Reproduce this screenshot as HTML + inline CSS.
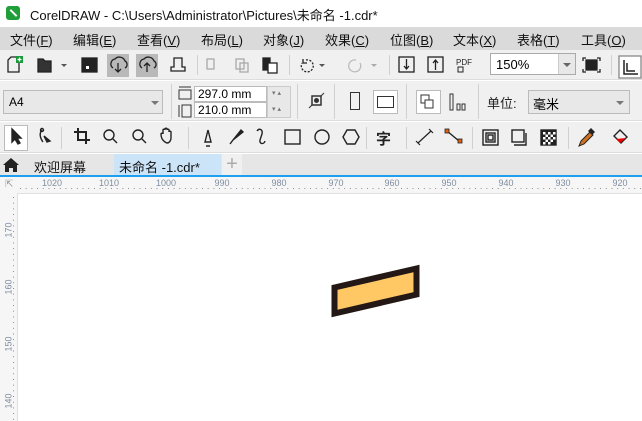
<!DOCTYPE html>
<html><head><meta charset="utf-8"><style>
*{margin:0;padding:0;box-sizing:border-box}
body{width:642px;height:421px;overflow:hidden;background:#fff;font-family:"Liberation Sans","Noto Sans CJK SC",sans-serif;position:relative}
.a{position:absolute}
.menu span{position:absolute;top:3px;font-size:13px;color:#111}
.sep{position:absolute;width:1px;background:#d0d0d0}
.rn{position:absolute;top:178px;font-size:9px;color:#7f8da0;transform:translateX(-50%)}
.vn{position:absolute;left:1px;font-size:9px;color:#7f8da0;transform:rotate(-90deg);transform-origin:center}
svg{position:absolute;overflow:visible}
</style></head><body>
<!-- title -->
<div class="a" style="left:0;top:0;width:642px;height:27px;background:#fff"></div>
<div class="a" style="left:6px;top:6px;width:14px;height:14px;border-radius:3px;background:#1f9e3a"></div>
<div class="a" style="left:9px;top:12px;width:9px;height:2px;background:#fff;transform:rotate(45deg)"></div>
<div class="a" style="left:30px;top:5px;font-size:13px;color:#111">CorelDRAW - C:\Users\Administrator\Pictures\未命名 -1.cdr*</div>
<!-- menu -->
<div class="a menu" style="left:0;top:27px;width:642px;height:23px;background:#dadada">
<span style="left:10px">文件(<u>F</u>)</span><span style="left:73px">编辑(<u>E</u>)</span><span style="left:137px">查看(<u>V</u>)</span><span style="left:201px">布局(<u>L</u>)</span><span style="left:263px">对象(<u>J</u>)</span><span style="left:325px">效果(<u>C</u>)</span><span style="left:390px">位图(<u>B</u>)</span><span style="left:453px">文本(<u>X</u>)</span><span style="left:517px">表格(<u>T</u>)</span><span style="left:581px">工具(<u>O</u>)</span>
</div>
<!-- toolbar 1 -->
<div class="a" style="left:0;top:50px;width:642px;height:30px;background:#f0f0f0;border-bottom:1px solid #ddd"></div>
<svg style="left:0;top:50px" width="642" height="30" fill="none" stroke="#222" stroke-width="1.3">
<path d="M8 22V10l3-3h8v15z"/><rect x="16" y="6" width="7" height="7" fill="#1a9a3a" stroke="none"/><path d="M19.5 7.5v4M17.5 9.5h4" stroke="#fff"/>
<path d="M38 22V9h5l2 2h6v11z" fill="#333"/><path d="M61 14l3 3 3-3" fill="#555" stroke="none"/>
<rect x="82" y="8" width="15" height="14" fill="#222"/><rect x="86" y="16" width="3" height="3" fill="#fff" stroke="none"/>
<rect x="107" y="4" width="22" height="23" fill="#b9b9b9" stroke="none"/><rect x="136" y="4" width="22" height="23" fill="#b9b9b9" stroke="none"/>
<path d="M113 18a5 5 0 0 1 2-9 6 6 0 0 1 10 2 4 4 0 0 1 0 7M118 13v9M115 19l3 3 3-3"/>
<path d="M142 18a5 5 0 0 1 2-9 6 6 0 0 1 10 2 4 4 0 0 1 0 7M147 22v-9M144 16l3-3 3 3"/>
<path d="M171 21h14v-4h-3v-9h-8v9h-3z"/>
<g stroke="#aaa"><rect x="207" y="9" width="7" height="10"/><rect x="236" y="9" width="8" height="10"/><rect x="240" y="13" width="8" height="9"/></g>
<rect x="263" y="8" width="7" height="12" fill="#222"/><rect x="268" y="13" width="9" height="10" fill="#fff"/>
<path d="M306 10a6 6 0 1 1-4 3" stroke-dasharray="2 1.5"/><path d="M303 9l0 4 4 0" /><path d="M319 14l3 3 3-3" fill="#555" stroke="none"/>
<path d="M356 10a6 6 0 1 0 4 3" stroke="#bbb"/><path d="M371 14l3 3 3-3" fill="#aaa" stroke="none"/>
<rect x="399" y="7" width="15" height="15"/><path d="M406.5 9v10M404 16l2.5 3 2.5-3"/>
<rect x="428" y="7" width="15" height="15"/><path d="M435.5 20v-10M433 13l2.5-3 2.5 3"/>
<text x="456" y="15" font-size="8" fill="#222" stroke="none" font-family="Liberation Sans">PDF</text><rect x="458" y="17" width="5" height="5" stroke-width="1"/>
<path d="M586 8h-3v3M597 8h3v3M586 22h-3v-3M597 22h3v-3"/><rect x="586" y="10" width="11" height="10" fill="#222"/>
<rect x="619" y="6" width="22" height="22" fill="#fff" stroke="#888"/><path d="M624 10v14h14M627 13v8h8" stroke-width="1.5"/>
</svg>
<div class="sep" style="left:197px;top:55px;height:20px"></div>
<div class="sep" style="left:289px;top:55px;height:20px"></div>
<div class="sep" style="left:389px;top:55px;height:20px"></div>
<div class="sep" style="left:611px;top:55px;height:20px"></div>
<div class="a" style="left:490px;top:53px;width:86px;height:22px;border:1px solid #aaa;background:#fff;font-size:13px;padding:3px 5px">150%</div>
<div class="a" style="left:558px;top:54px;width:17px;height:20px;background:#e8e8e8;border-left:1px solid #ccc"></div>
<svg style="left:562px;top:62px" width="10" height="6"><path d="M1 1l4 4 4-4z" fill="#666"/></svg>
<!-- toolbar 2 -->
<div class="a" style="left:0;top:81px;width:642px;height:40px;background:#f0f0f0;border-bottom:1px solid #ddd"></div>
<div class="a" style="left:3px;top:90px;width:160px;height:24px;border:1px solid #bbb;background:#e8e8e8;font-size:12px;padding:4px 5px">A4</div>
<svg style="left:150px;top:100px" width="10" height="6"><path d="M1 1l4 4 4-4z" fill="#777"/></svg>
<div class="sep" style="left:171px;top:84px;height:35px"></div>
<svg style="left:178px;top:86px" width="14" height="32" fill="none" stroke="#333"><path d="M1 1h12M1 4h12v9H1z"/><path d="M1 19v12M4 19h9v12H4z"/></svg>
<div class="a" style="left:194px;top:86px;width:73px;height:16px;border:1px solid #bbb;background:#fff;font-size:12px;padding:0 3px;line-height:15px">297.0 mm</div>
<div class="a" style="left:194px;top:102px;width:73px;height:16px;border:1px solid #bbb;background:#fff;font-size:12px;padding:0 3px;line-height:15px">210.0 mm</div>
<div class="a" style="left:267px;top:86px;width:24px;height:32px;border:1px solid #ccc;background:#e8e8e8"></div>
<div class="a" style="left:272px;top:89px;font-size:7px;color:#777">▾ ▴</div>
<div class="a" style="left:272px;top:105px;font-size:7px;color:#777">▾ ▴</div>
<div class="sep" style="left:297px;top:84px;height:35px"></div>
<svg style="left:306px;top:90px" width="22" height="22" fill="none" stroke="#333"><rect x="6" y="6" width="9" height="9" stroke-width="1.5"/><circle cx="10.5" cy="10.5" r="2" fill="#333"/><path d="M3 18l3-3M15 6l3-3"/></svg>
<div class="sep" style="left:334px;top:84px;height:35px"></div>
<div class="a" style="left:350px;top:92px;width:10px;height:18px;border:1.3px solid #333"></div>
<div class="a" style="left:373px;top:90px;width:25px;height:24px;border:1px solid #bbb;background:#fff"></div>
<div class="a" style="left:377px;top:96px;width:17px;height:12px;border:1.3px solid #333"></div>
<div class="sep" style="left:406px;top:84px;height:35px"></div>
<div class="a" style="left:416px;top:90px;width:25px;height:24px;border:1px solid #bbb;background:#fff"></div>
<svg style="left:419px;top:93px" width="20" height="20" fill="none" stroke="#333"><rect x="2" y="2" width="8" height="8"/><rect x="6" y="7" width="8" height="8" fill="#fff"/></svg>
<svg style="left:448px;top:93px" width="20" height="20" fill="none" stroke="#333"><rect x="2" y="1" width="3" height="16"/><rect x="9" y="11" width="3" height="6"/><rect x="14" y="11" width="3" height="6"/></svg>
<div class="sep" style="left:478px;top:84px;height:35px"></div>
<div class="a" style="left:487px;top:93px;font-size:13px;color:#222">单位:</div>
<div class="a" style="left:528px;top:90px;width:102px;height:24px;border:1px solid #bbb;background:#e8e8e8;font-size:13px;padding:3px 4px">毫米</div>
<svg style="left:615px;top:100px" width="10" height="6"><path d="M1 1l4 4 4-4z" fill="#777"/></svg>
<!-- toolbox -->
<div class="a" style="left:0;top:122px;width:642px;height:31px;background:#f0f0f0;border-bottom:1px solid #ddd"></div>
<div class="a" style="left:4px;top:125px;width:24px;height:26px;border:1px solid #bbb;background:#fff"></div>
<svg style="left:0;top:122px" width="642" height="32" fill="none" stroke="#222" stroke-width="1.4">
<path d="M12 7v13l3-3 3 5 2-1-3-5h4z" fill="#222"/>
<path d="M42 8c-3 3-2 8 1 12"/><path d="M44 14l6 5-3 1z" fill="#222"/><circle cx="42" cy="8" r="1.5"/>
<path d="M78 6v12h12M74 10h12v12" stroke-width="2"/>
<circle cx="109" cy="13" r="5"/><path d="M113 17l4 4"/>
<circle cx="138" cy="13" r="5"/><path d="M142 17l4 4"/>
<path d="M165 20c-3-2-4-5-4-8 0-1 2-1 2 0v-4c0-1 2-1 2 0v-1c0-1 2-1 2 0v1c0-1 2-1 2 0v2c0-1 2-1 2 0v6c0 3-2 5-4 5z"/>
<path d="M205 20l3-12 3 12zM206 24h4"/>
<path d="M230 22l3-4 8-10 2 2-10 8z" fill="#222"/>
<path d="M257 9c2-3 6-2 5 3l-2 6c-1 4 4 5 5 1"/>
<rect x="285" y="8" width="15" height="14"/>
<circle cx="322" cy="15" r="7"/>
<path d="M347 8h8l4 7-4 7h-8l-4-7z"/>
<text x="376" y="22" font-size="15" font-weight="bold" fill="#222" stroke="none" font-family="Noto Sans CJK SC">字</text>
<path d="M418 21l13-12M416 19l4 4M429 7l4 4" stroke-width="1.2"/>
<path d="M447 9l12 10"/><rect x="445" y="7" width="4" height="4" fill="#e06010" stroke="#222" stroke-width="0.8"/><rect x="458" y="17" width="4" height="4" fill="#e06010" stroke="#222" stroke-width="0.8"/>
<rect x="483" y="8" width="15" height="15"/><rect x="486" y="11" width="9" height="9"/><rect x="488" y="13" width="5" height="5"/>
<rect x="512" y="8" width="12" height="12"/><path d="M526 11v12h-12"/>
<rect x="541" y="8" width="15" height="15" fill="#222"/>
<path d="M579 24l2-5 9-9 3 3-9 9z" fill="#d07020" stroke="#222" stroke-width="1"/><path d="M589 9l2-2 3 3-2 2z" fill="#222"/>
<path d="M614 14l6-6 7 7-6 6z"/><path d="M616 17l4 4 6-5z" fill="#e00" stroke="none"/>
</svg>
<svg style="left:541px;top:130px" width="15" height="15"><g fill="#fff"><rect x="2" y="2" width="2.5" height="2.5"/><rect x="7" y="2" width="2.5" height="2.5"/><rect x="12" y="2" width="2.5" height="2.5"/><rect x="4.5" y="4.5" width="2.5" height="2.5"/><rect x="9.5" y="4.5" width="2.5" height="2.5"/><rect x="2" y="7" width="2.5" height="2.5"/><rect x="7" y="7" width="2.5" height="2.5"/><rect x="12" y="7" width="2.5" height="2.5"/><rect x="4.5" y="9.5" width="2.5" height="2.5"/><rect x="9.5" y="9.5" width="2.5" height="2.5"/><rect x="2" y="12" width="2.5" height="2.5"/><rect x="7" y="12" width="2.5" height="2.5"/></g></svg>
<div class="sep" style="left:61px;top:127px;height:22px"></div>
<div class="sep" style="left:188px;top:127px;height:22px"></div>
<div class="sep" style="left:366px;top:127px;height:22px"></div>
<div class="sep" style="left:406px;top:127px;height:22px"></div>
<div class="sep" style="left:472px;top:127px;height:22px"></div>
<div class="sep" style="left:568px;top:127px;height:22px"></div>
<!-- tabs -->
<div class="a" style="left:0;top:154px;width:642px;height:22px;background:#e6e6e6"></div>
<svg style="left:2px;top:157px" width="18" height="16"><path d="M1 8l8-7 8 7h-2v7h-4v-4h-4v4H3V8z" fill="#222"/></svg>
<div class="a" style="left:34px;top:157px;font-size:13px;color:#111">欢迎屏幕</div>
<div class="a" style="left:114px;top:154px;width:107px;height:22px;background:#cce4f7"></div>
<div class="a" style="left:119px;top:157px;font-size:13px;color:#111">未命名 -1.cdr*</div>
<div class="a" style="left:222px;top:154px;width:20px;height:22px;background:#f0f0f0;color:#aaa;font-size:20px;text-align:center;line-height:20px">+</div>
<div class="a" style="left:0;top:175px;width:642px;height:2px;background:#1ea0f0"></div>
<!-- rulers -->
<div class="a" style="left:0;top:177px;width:642px;height:17px;background:#f6f6f6"></div>
<div class="a" style="left:0;top:177px;width:18px;height:244px;background:#f6f6f6"></div>
<div class="a" style="left:18px;top:193px;width:624px;height:1px;background:#e0e0e0"></div>
<div class="a" style="left:17px;top:193px;width:1px;height:228px;background:#e0e0e0"></div>
<div class="a" style="left:18px;top:188px;width:624px;height:1px;background-image:linear-gradient(90deg,#888 1px,transparent 1px);background-size:5.7px 1px;background-position:2px 0"></div>
<div class="a" style="left:13px;top:194px;width:1px;height:227px;background-image:linear-gradient(#888 1px,transparent 1px);background-size:1px 5.7px;background-position:0 3px"></div>
<div class="a" style="left:5px;top:179px;font-size:10px;color:#999">⇱</div>
<div class="rn" style="left:52px">1020</div><div class="rn" style="left:109px">1010</div><div class="rn" style="left:166px">1000</div><div class="rn" style="left:222px">990</div><div class="rn" style="left:279px">980</div><div class="rn" style="left:336px">970</div><div class="rn" style="left:392px">960</div><div class="rn" style="left:449px">950</div><div class="rn" style="left:506px">940</div><div class="rn" style="left:563px">930</div><div class="rn" style="left:620px">920</div>
<div class="vn" style="top:225px">170</div><div class="vn" style="top:282px">160</div><div class="vn" style="top:339px">150</div><div class="vn" style="top:396px">140</div>
<!-- shape -->
<svg style="left:0;top:0" width="642" height="421"><polygon points="334.5,287.5 416.5,268.5 416.5,294.5 334.5,313.5" fill="#ffc864" stroke="#231815" stroke-width="6"/></svg>
</body></html>
